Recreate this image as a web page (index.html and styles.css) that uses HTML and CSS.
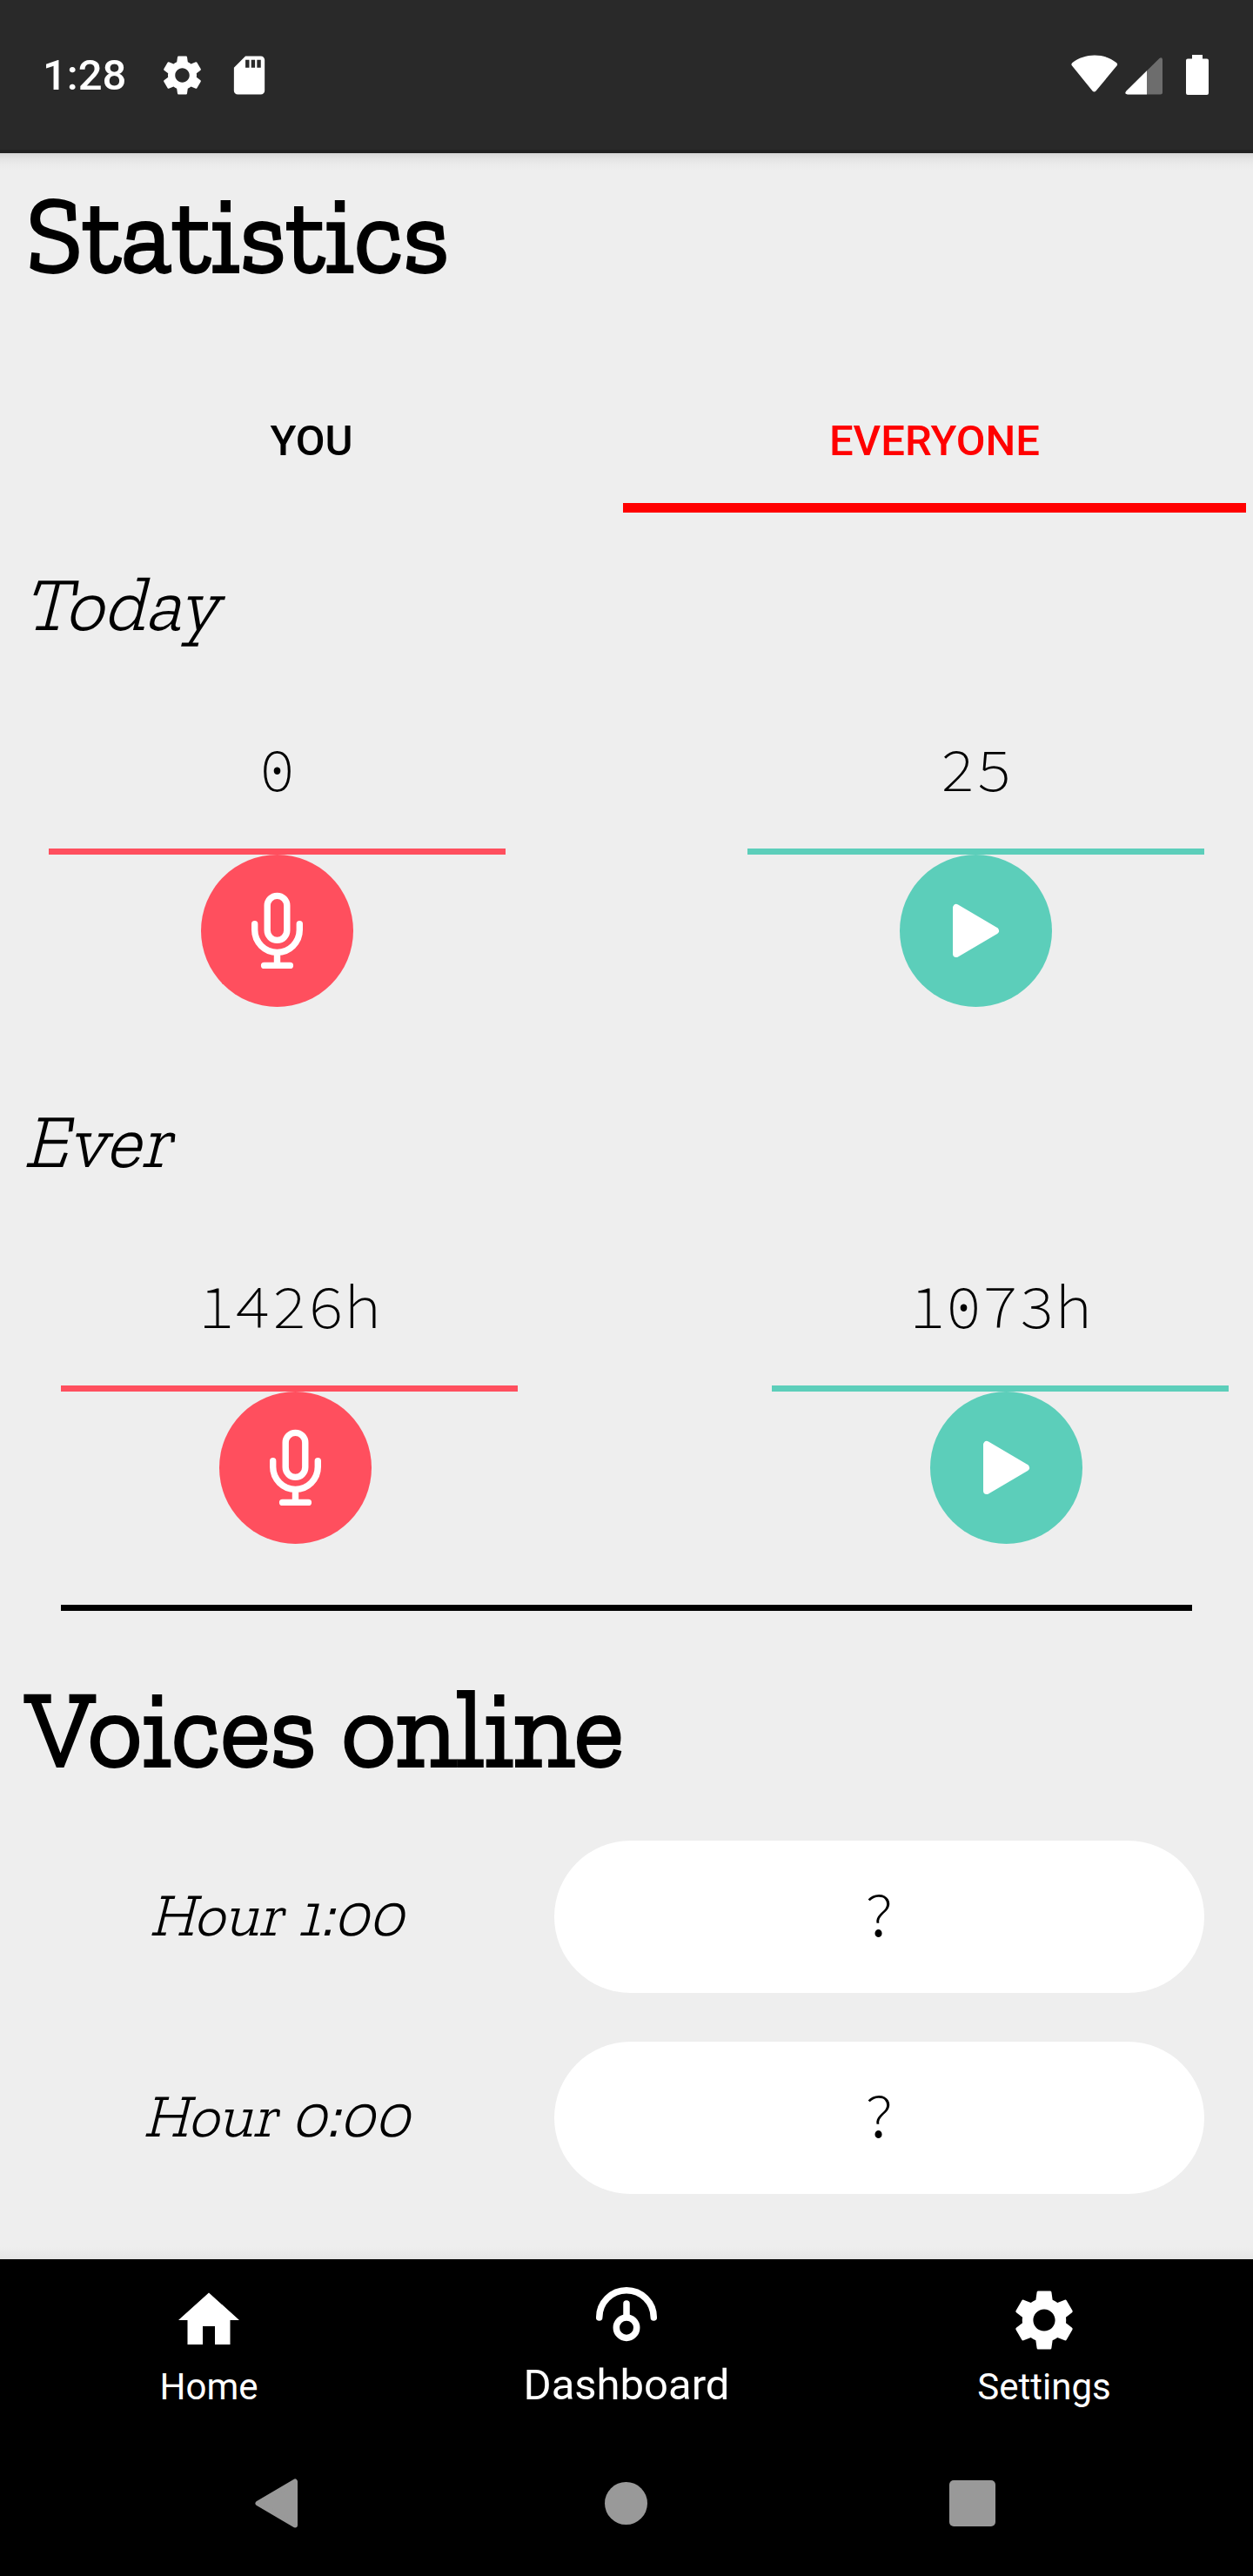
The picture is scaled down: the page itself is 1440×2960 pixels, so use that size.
FILE: index.html
```html
<!DOCTYPE html>
<html lang="en">
<head>
<meta charset="utf-8">
<title>Statistics</title>
<link rel="stylesheet" href="styles.css">
</head>
<body>
<svg width="0" height="0" class="defs" aria-hidden="true">
  <defs>
    <symbol id="gear" viewBox="0 0 24 24"><path d="M19.14,12.94c0.04-0.3,0.06-0.61,0.06-0.94c0-0.32-0.02-0.64-0.07-0.94l2.03-1.58c0.18-0.14,0.23-0.41,0.12-0.61l-1.92-3.32c-0.12-0.22-0.37-0.29-0.59-0.22l-2.39,0.96c-0.5-0.38-1.03-0.7-1.62-0.94L14.4,2.81c-0.04-0.24-0.24-0.41-0.48-0.41h-3.84c-0.24,0-0.43,0.17-0.47,0.41L9.25,5.35C8.66,5.59,8.12,5.92,7.63,6.29L5.24,5.33c-0.22-0.08-0.47,0-0.59,0.22L2.74,8.87C2.62,9.08,2.66,9.34,2.86,9.48l2.03,1.58C4.84,11.36,4.8,11.69,4.8,12s0.02,0.64,0.07,0.94l-2.03,1.58c-0.18,0.14-0.23,0.41-0.12,0.61l1.92,3.32c0.12,0.22,0.37,0.29,0.59,0.22l2.39-0.96c0.5,0.38,1.03,0.7,1.62,0.94l0.36,2.54c0.05,0.24,0.24,0.41,0.48,0.41h3.84c0.24,0,0.44-0.17,0.47-0.41l0.36-2.54c0.59-0.24,1.13-0.56,1.62-0.94l2.39,0.96c0.22,0.08,0.47,0,0.59-0.22l1.92-3.32c0.12-0.22,0.07-0.47-0.12-0.61L19.14,12.94z M12,15.6c-1.98,0-3.6-1.62-3.6-3.6s1.62-3.6,3.6-3.6s3.6,1.62,3.6,3.6S13.98,15.6,12,15.6z"/></symbol>
    <symbol id="mic" viewBox="0 0 175 175"><g fill="none" stroke="#fff" stroke-width="7.4" stroke-linecap="round"><rect x="76.2" y="47.4" width="22.6" height="51" rx="11.3"/><path d="M61.7 79.8v6.8a25.8 25.8 0 0 0 51.6 0v-6.8M87.5 113v14M72.6 127.4h29.8"/></g></symbol>
    <symbol id="play" viewBox="0 0 175 175"><path d="M65 61v53L110 87.5z" fill="#fff" stroke="#fff" stroke-width="8" stroke-linejoin="round"/></symbol>
  </defs>
</svg>

<header class="status">
  <span class="clock">1:28</span>
  <svg class="status-gear"><use href="#gear"/></svg>
  <svg class="status-sd" viewBox="0 0 24 24"><path d="M18 2h-8L4.02 8 4 20c0 1.1.9 2 2 2h12c1.1 0 2-.9 2-2V4c0-1.1-.9-2-2-2zm-6 6h-2V4h2v4zm3 0h-2V4h2v4zm3 0h-2V4h2v4z"/></svg>
  <svg class="status-right" viewBox="0 0 158 46">
    <path d="M1 12.500Q-.5 10.500 1.500 9C16-2.500 38-2.500 52 9Q54 10.500 52.500 12.500L28.500 41.500Q26.500 43.500 24.500 41.500z"/>
    <path d="M63.500 41.500 101.500 4Q104.500 2 105 5.500V43Q105 45.500 102.500 45.500H65Q60.500 45 63.500 41.500z" fill-opacity=".32"/>
    <path d="M63.500 41.500 87 18.300V45.500H65Q60.500 45 63.500 41.500z"/>
    <path d="M139 0h12v4.500h5q2 0 2 2V44q0 2-2 2h-22q-2 0-2-2V6.500q0-2 2-2h5z"/>
  </svg>
</header>

<main class="screen">
  <h1 class="title">Statistics</h1>
  <nav class="tabs">
    <a class="tab">YOU</a>
    <a class="tab tab-active">EVERYONE</a>
  </nav>

  <h2 class="period">Today</h2>
  <section class="stats">
    <div class="stat speak"><span class="value">0</span><span class="rule"></span><svg class="badge"><use href="#mic"/></svg></div>
    <div class="stat listen"><span class="value">25</span><span class="rule"></span><svg class="badge"><use href="#play"/></svg></div>
  </section>

  <h2 class="period period-ever">Ever</h2>
  <section class="stats stats-ever">
    <div class="stat speak"><span class="value">1426h</span><span class="rule"></span><svg class="badge"><use href="#mic"/></svg></div>
    <div class="stat listen"><span class="value">1073h</span><span class="rule"></span><svg class="badge"><use href="#play"/></svg></div>
  </section>

  <hr class="divider">

  <h1 class="title title-voices">Voices online</h1>
  <section class="hours">
    <div class="hour"><span class="hour-label">Hour 1:00</span><span class="pill">?</span></div>
    <div class="hour"><span class="hour-label">Hour 0:00</span><span class="pill">?</span></div>
  </section>
</main>

<nav class="bottom">
  <a class="item"><svg class="icon" viewBox="0 0 24 24"><path d="M10 20v-6h4v6h5v-8h3L12 3 2 12h3v8z"/></svg><span>Home</span></a>
  <a class="item item-active"><svg class="icon" viewBox="0 0 84 84"><g fill="none" stroke="#fff" stroke-width="7.5" stroke-linecap="round"><path d="M10.700 46a31.300 31.300 0 0 1 62.600 0M42 30v14"/><circle cx="42" cy="57.700" r="11.700"/></g></svg><span>Dashboard</span></a>
  <a class="item"><svg class="icon"><use href="#gear"/></svg><span>Settings</span></a>
</nav>
<footer class="system">
  <svg class="sys-back" viewBox="0 0 50 57"><path d="M46 3.500v50L3.500 28.500z"/></svg>
  <span class="sys-home"></span>
  <span class="sys-recent"></span>
</footer>
</body>
</html>
```
FILE: styles.css
```css
* { box-sizing: border-box; }

body {
  margin: 0;
  width: 1440px;
  height: 2960px;
  display: flex;
  flex-direction: column;
  background: #eee;
  color: #000;
  font-family: Roboto, sans-serif;
  overflow: hidden;
}

svg { display: block; fill: #fff; flex: none; }
.defs { position: absolute; }

/* Status bar */
.status {
  flex: none;
  height: 176px;
  display: flex;
  align-items: center;
  padding: 0 51px 4px 49px;
  background: #292929;
  border-bottom: 4px solid #212121;
  color: #fff;
}
.clock { width: 133px; font-size: 49px; font-weight: 500; line-height: 58px; padding-top: 6px; }
.status-gear { width: 55px; height: 55px; margin-top: 4px; }
.status-sd { width: 53px; height: 53px; margin: 4px 0 0 23px; }
.status-right { width: 158px; height: 46px; margin: 4px 0 0 auto; }

/* Scrolling content */
.screen {
  flex: none;
  height: 2420px;
  padding-top: 20px;
  background:
    linear-gradient(#d6d6d6, #e3e3e3 6px, #ebebeb 13px, #eee 20px) top / 100% 20px no-repeat,
    linear-gradient(#eee, #e6e6e6) bottom / 100% 14px no-repeat,
    #eee;
}

.title {
  margin: 0;
  padding-left: 30px;
  font: 300 122.5px/147px "Zilla Slab", "DejaVu Serif", serif;
  -webkit-text-stroke: 3.8px #000;
}
.title-voices { margin-top: 62px; }

.tabs { display: flex; width: 1432px; margin-top: 78px; }
.tab {
  flex: 1;
  height: 168px;
  border-bottom: 11px solid transparent;
  font-size: 49px;
  font-weight: 500;
  line-height: 172px;
  text-align: center;
}
.tab-active { color: #f00; border-color: #f00; }

/* Slanted light face: the upright letters skewed around their baseline */
.period {
  margin: 52px 0 94px;
  padding-left: 28px;
  font: 300 87.5px/105px "Zilla Slab", "DejaVu Serif", serif;
  transform: skewX(-14deg);
  transform-origin: 0 77px;
}
.period-ever { margin-top: 101px; }

.stats { display: flex; justify-content: space-between; padding: 0 56px; }
.stats-ever { padding: 0 28px 0 70px; }
.stats-ever .badge { margin-left: 14px; }
.stat { width: 525px; display: flex; flex-direction: column; align-items: center; }
.value {
  height: 135px;
  font: 300 70px/88px "Source Code Pro", "Liberation Mono", monospace;
}
.rule { width: 100%; height: 7px; }
.badge { width: 175px; height: 175px; border-radius: 50%; }
.speak .rule, .speak .badge { background: #ff4f5e; }
.listen .rule, .listen .badge { background: #5cceba; }

.divider { width: 1300px; height: 7px; margin: 70px 70px 0; border: 0; background: #000; }

/* Voices online */
.hours { display: flex; flex-direction: column; gap: 56px; margin-top: 55px; }
.hour { display: flex; align-items: center; height: 175px; padding-right: 56px; }
.hour-label {
  flex: 1;
  padding-bottom: 5px;
  text-align: center;
  font: 300 70px/84px "Zilla Slab", "DejaVu Serif", serif;
  transform: skewX(-14deg);
  transform-origin: 0 62px;
}
.pill {
  width: 747px;
  height: 175px;
  border-radius: 88px;
  background: #fff;
  text-align: center;
  font: 300 70px/171px "Source Code Pro", "Liberation Mono", monospace;
}

/* Bottom navigation */
.bottom { flex: none; display: flex; height: 196px; background: #000; color: #fff; }
.item {
  flex: 1;
  display: flex;
  flex-direction: column;
  align-items: center;
  padding-top: 28px;
  font-size: 42px;
  line-height: 50px;
}
.icon { width: 84px; height: 84px; }
.item span { margin-top: 10px; }
.item-active { padding-top: 21px; font-size: 49px; line-height: 58px; }
.item-active span { margin-top: 11px; }

.system {
  flex: none;
  height: 168px;
  display: flex;
  align-items: center;
  padding-left: 293px;
  background: #000;
  color: #999;
}
.sys-back { width: 50px; height: 57px; fill: #999; stroke: #999; stroke-width: 6px; stroke-linejoin: round; }
.sys-home { width: 49px; height: 49px; margin-left: 352px; border-radius: 50%; background: #999; }
.sys-recent { width: 53px; height: 53px; margin-left: 347px; border-radius: 5px; background: #999; }
```
